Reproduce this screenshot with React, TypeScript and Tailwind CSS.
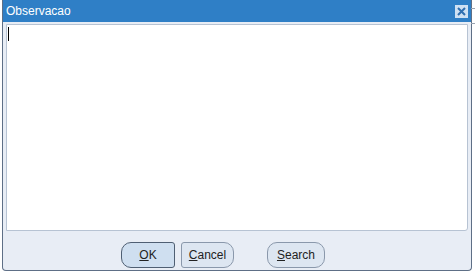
import React from "react";

const App = () => {
  return (
    <div
      className="w-[475px] h-[274px] bg-white relative overflow-hidden"
      style={{ fontFamily: '"Liberation Sans", Arial, sans-serif' }}
    >
      <div className="absolute right-0 top-0 flex h-full w-[4px] flex-col gap-[14px] pt-[8px]">
        <div className="h-px bg-[#9aa3b0]" />
        <div className="h-px bg-[#9aa3b0]" />
      </div>
      <div className="ml-[2px] flex h-[271px] w-[470px] flex-col rounded-b-[4px] border border-t-0 border-[#5e6f86] bg-[#e8edf5]">
        <div className="flex h-[22px] items-center justify-between bg-[#2f7fc6] pl-[3px] pr-[3px]">
          <span className="text-[12px] text-white">Observacao</span>
          <div className="flex h-[13px] w-[13px] items-center justify-center bg-[#cfe1f3]">
            <svg width="9" height="9" viewBox="0 0 9 9">
              <path d="M1 1 L8 8 M8 1 L1 8" stroke="#2f6fb0" strokeWidth="2" />
            </svg>
          </div>
        </div>
        <div className="mx-[3px] mt-[2px] h-[207px] rounded-br-[3px] border border-[#b7c3d3] bg-white pl-[1px] pt-[2px]">
          <div className="h-[14px] w-px bg-black" />
        </div>
        <div className="flex flex-1 items-start pl-[118px] pt-[11px]">
          <button className="h-[26px] w-[54px] rounded-l-[10px] rounded-r-[3px] border border-[#4f5f73] bg-[#cfdff0] text-[12px] text-[#222]">
            <span className="underline">O</span>K
          </button>
          <button className="ml-[6px] h-[26px] w-[53px] rounded-l-[3px] rounded-r-[10px] border border-[#8a98ab] bg-[#dde6f1] text-[12px] text-[#222]">
            <span className="underline">C</span>ancel
          </button>
          <button className="ml-[33px] h-[26px] w-[58px] rounded-[10px] border border-[#8a98ab] bg-[#dde6f1] text-[12px] text-[#222]">
            <span className="underline">S</span>earch
          </button>
        </div>
      </div>
    </div>
  );
};

export default App;
